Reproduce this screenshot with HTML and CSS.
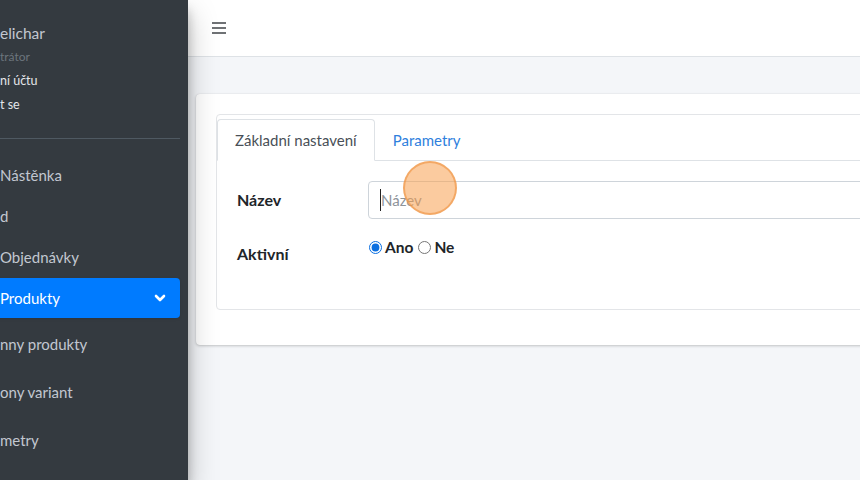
FILE: index.html
```html
<!DOCTYPE html>
<html lang="cs">
<head>
    <meta charset="UTF-8">
    <meta name="viewport" content="width=device-width, initial-scale=1.0">
    <title>Parametry - úprava</title>
    <link rel="stylesheet" href="styles.css">
</head>
<body>
    <div class="wrapper">
        <aside class="sidebar">
            <div class="user-panel">
                <div class="user-name">elichar</div>
                <div class="user-role">trátor</div>
                <a class="user-link" href="#">ní účtu</a>
                <a class="user-link" href="#">t se</a>
            </div>
            <ul class="nav">
                <li class="nav-item"><a class="nav-link" href="#">Nástěnka</a></li>
                <li class="nav-item"><a class="nav-link" href="#">d</a></li>
                <li class="nav-item"><a class="nav-link" href="#">Objednávky</a></li>
                <li class="nav-item">
                    <a class="nav-link active" href="#">
                        <span>Produkty</span>
                        <svg class="chevron" width="12" height="10" viewBox="0 0 12 10">
                            <path d="M2 3 L6 7 L10 3" fill="none" stroke="#fff" stroke-width="2.6" stroke-linecap="round" stroke-linejoin="round"/>
                        </svg>
                    </a>
                    <ul class="nav-sub">
                        <li><a class="nav-link sub" href="#">nny produkty</a></li>
                        <li><a class="nav-link sub" href="#">ony variant</a></li>
                        <li><a class="nav-link sub" href="#">metry</a></li>
                    </ul>
                </li>
            </ul>
        </aside>

        <div class="main">
            <header class="topbar">
                <a class="menu-toggle" href="#">
                    <svg width="14" height="12" viewBox="0 0 14 12">
                        <rect x="0" y="0" width="14" height="2" fill="#6f7275"/>
                        <rect x="0" y="5" width="14" height="2" fill="#6f7275"/>
                        <rect x="0" y="10" width="14" height="2" fill="#6f7275"/>
                    </svg>
                </a>
            </header>

            <section class="content">
                <div class="card">
                    <div class="card-body">
                        <div class="card card-tabs">
                            <div class="card-header">
                                <ul class="tabs">
                                    <li><a class="tab active" href="#">Základní nastavení</a></li>
                                    <li><a class="tab" href="#">Parametry</a></li>
                                </ul>
                            </div>
                            <div class="card-body">
                                <div class="form-row">
                                    <label class="form-label" for="name">Název</label>
                                    <div class="field">
                                        <input type="text" id="name" class="form-control" placeholder="Název">
                                        <span class="caret"></span>
                                    </div>
                                </div>
                                <div class="form-row">
                                    <label class="form-label">Aktivní</label>
                                    <div class="radios">
                                        <label class="radio"><input type="radio" name="active" checked> Ano</label>
                                        <label class="radio"><input type="radio" name="active"> Ne</label>
                                    </div>
                                </div>
                            </div>
                        </div>
                    </div>
                </div>
            </section>
        </div>
    </div>
    <div class="click-marker"></div>
</body>
</html>
```

FILE: styles.css
```css
html, body {
    margin: 0;
    padding: 0;
}
body {
    font-family: Lato, 'Open Sans', sans-serif;
    font-size: 15px;
    color: #212529;
    width: 860px;
    height: 480px;
    overflow: hidden;
    position: relative;
}
a {
    text-decoration: none;
}
ul {
    list-style: none;
    margin: 0;
    padding: 0;
}
.wrapper {
    display: flex;
    height: 480px;
}

/* sidebar */
.sidebar {
    width: 188px;
    flex-shrink: 0;
    background-color: #343a40;
    color: #c2c7d0;
    box-shadow: 0 14px 28px rgba(0, 0, 0, .25), 0 10px 10px rgba(0, 0, 0, .22);
    position: relative;
    z-index: 2;
    overflow: hidden;
}
.user-panel {
    margin-right: 8px;
    padding: 21px 0 21px;
    border-bottom: 1px solid #4f5962;
    display: flex;
    flex-direction: column;
}
.user-name {
    font-size: 15.5px;
    line-height: 24px;
}
.user-role {
    font-size: 12px;
    line-height: 24px;
    color: #6c757d;
}
.user-link {
    font-size: 12.5px;
    line-height: 24px;
    color: #e4e6ea;
}
.nav {
    margin-right: 8px;
    padding-top: 16px;
}
.nav-link {
    display: flex;
    align-items: center;
    justify-content: space-between;
    height: 40px;
    margin-bottom: 1px;
    color: #c2c7d0;
    font-size: 15px;
}
.nav-link.active {
    background-color: #007bff;
    color: #fff;
    border-radius: 4px;
    margin-top: 1px;
    margin-left: -8px;
    padding-left: 8px;
    padding-right: 14px;
    box-shadow: 0 1px 3px rgba(0, 0, 0, .12);
}
.nav-sub {
    padding-top: 1px;
}
.nav-link.sub {
    height: 48px;
    margin-bottom: 0;
}

/* main */
.main {
    flex: 1;
    background-color: #f4f6f9;
    overflow: hidden;
}
.topbar {
    height: 56px;
    background-color: #fff;
    border-bottom: 1px solid #dee2e6;
    display: flex;
    align-items: center;
    padding-left: 24px;
}
.menu-toggle {
    display: flex;
}
.content {
    padding: 37px 0 0 8px;
}
.card {
    background-color: #fff;
    border-radius: 4px;
    box-shadow: 0 0 1px rgba(0, 0, 0, .125), 0 1px 3px rgba(0, 0, 0, .2);
    width: 760px;
}
.card-body {
    padding: 20px;
}
.card-tabs {
    box-shadow: none;
    border: 1px solid #e3e5e8;
    width: auto;
    margin-right: -100px;
    margin-bottom: 15px;
}
.card-header {
    padding-top: 4px;
    border-bottom: 1px solid #dee2e6;
}
.tabs {
    display: flex;
    margin-bottom: -1px;
}
.tab {
    display: block;
    padding: 8px 17px;
    line-height: 24px;
    border: 1px solid transparent;
    border-radius: 4px 4px 0 0;
    color: #2f7fdd;
}
.tab.active {
    color: #495057;
    background-color: #fff;
    border-color: #dee2e6 #dee2e6 #fff;
}
.form-row {
    display: flex;
    min-height: 38px;
    margin-bottom: 16px;
}
.form-label {
    width: 131px;
    flex-shrink: 0;
    font-size: 16px;
    font-weight: 700;
    padding-top: 7px;
    line-height: 24px;
}
.field {
    flex: 1;
    position: relative;
}
.form-control {
    display: block;
    width: 100%;
    box-sizing: border-box;
    height: 38px;
    padding: 6px 12px;
    font-family: inherit;
    font-size: 15px;
    border: 1px solid #ced4da;
    border-radius: 4px;
    color: #495057;
}
.form-control::placeholder {
    color: #8d949a;
}
.caret {
    position: absolute;
    left: 12px;
    top: 8px;
    width: 1px;
    height: 22px;
    background-color: #222;
}
.radios {
    display: flex;
    align-items: flex-start;
    line-height: 24px;
}
.radio {
    font-size: 15.5px;
    font-weight: 700;
    display: flex;
    align-items: center;
    height: 24px;
    margin-right: 4px;
}
.radio input {
    margin: 0 3px 0 1px;
    width: 13px;
    height: 13px;
    accent-color: #0b6fe0;
}

/* click highlight */
.click-marker {
    position: absolute;
    left: 403px;
    top: 161px;
    width: 50px;
    height: 50px;
    border-radius: 50%;
    background-color: rgba(248, 160, 80, .55);
    border: 2px solid rgba(240, 150, 70, .65);
    z-index: 5;
}
```
